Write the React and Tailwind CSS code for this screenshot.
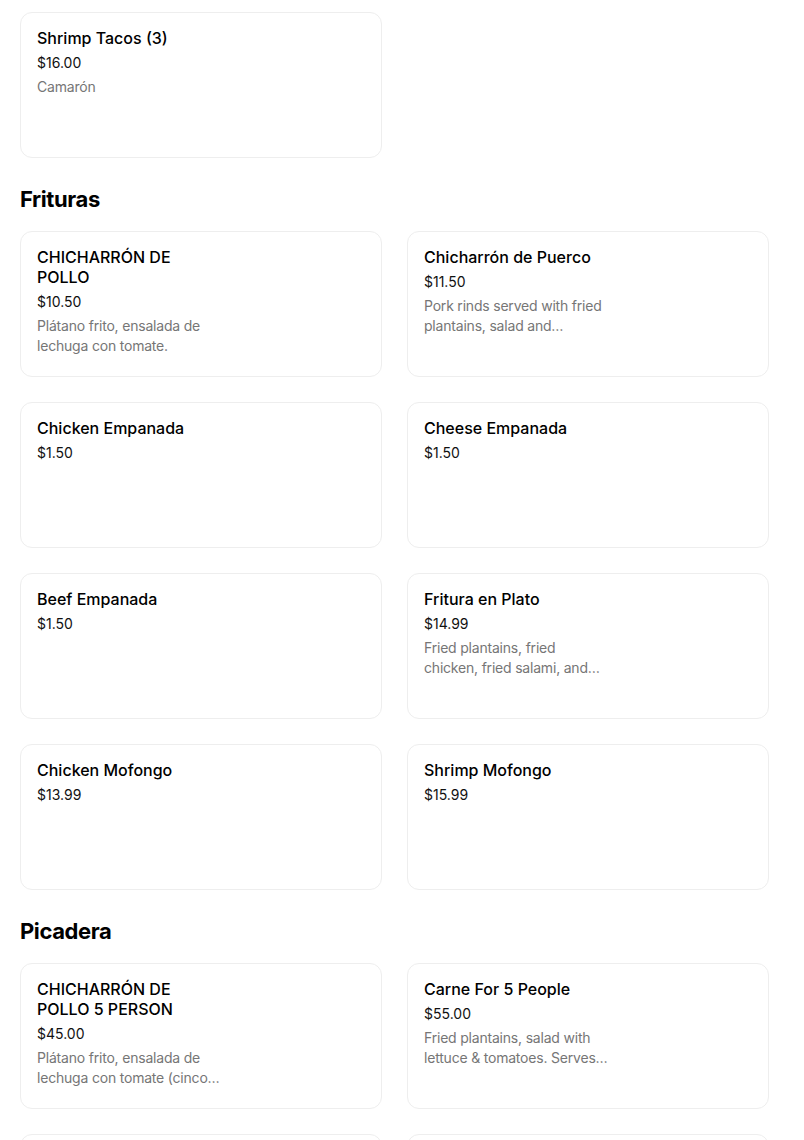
import React from "react";

const sections = [
  {
    title: null,
    items: [{ name: "Shrimp Tacos (3)", price: "$16.00", desc: "Camarón" }],
  },
  {
    title: "Frituras",
    items: [
      { name: "CHICHARRÓN DE POLLO", price: "$10.50", desc: "Plátano frito, ensalada de lechuga con tomate." },
      { name: "Chicharrón de Puerco", price: "$11.50", desc: "Pork rinds served with fried plantains, salad and tomatoes." },
      { name: "Chicken Empanada", price: "$1.50" },
      { name: "Cheese Empanada", price: "$1.50" },
      { name: "Beef Empanada", price: "$1.50" },
      { name: "Fritura en Plato", price: "$14.99", desc: "Fried plantains, fried chicken, fried salami, and cheese." },
      { name: "Chicken Mofongo", price: "$13.99" },
      { name: "Shrimp Mofongo", price: "$15.99" },
    ],
  },
  {
    title: "Picadera",
    items: [
      { name: "CHICHARRÓN DE POLLO 5 PERSON", price: "$45.00", desc: "Plátano frito, ensalada de lechuga con tomate (cinco personas)." },
      { name: "Carne For 5 People", price: "$55.00", desc: "Fried plantains, salad with lettuce & tomatoes. Serves five people." },
      { name: "Picadera Mixta", price: "$60.00" },
      { name: "Picadera Especial", price: "$70.00" },
    ],
  },
];

const ItemCard = ({ name, price, desc }) => (
  <div className="h-[146px] rounded-xl border border-[#eeeeee] bg-white px-4 pt-[15px]">
    <p className="max-w-[182px] text-[16px] leading-5 font-medium text-black">{name}</p>
    <p className="mt-[5px] text-[14px] leading-5 text-[#111111]">{price}</p>
    {desc && (
      <p className="mt-1 max-w-[184px] text-[14px] leading-5 tracking-[-0.2px] text-[#767676] line-clamp-2">
        {desc}
      </p>
    )}
  </div>
);

export default function App() {
  return (
    <div className="bg-white min-h-screen font-['Inter','Liberation_Sans',sans-serif] antialiased">
      <div className="w-[769px] pl-5 pt-3 flex flex-col">
        {sections.map((s, i) => (
          <section key={i} className={i > 0 ? "mt-[25px]" : ""}>
            {s.title && (
              <h2 className="text-[22px] leading-8 font-bold text-black tracking-[-0.4px] mb-4">{s.title}</h2>
            )}
            <div className="grid grid-cols-2 gap-[25px]">
              {s.items.map((it) => (
                <ItemCard key={it.name} {...it} />
              ))}
            </div>
          </section>
        ))}
      </div>
    </div>
  );
}
